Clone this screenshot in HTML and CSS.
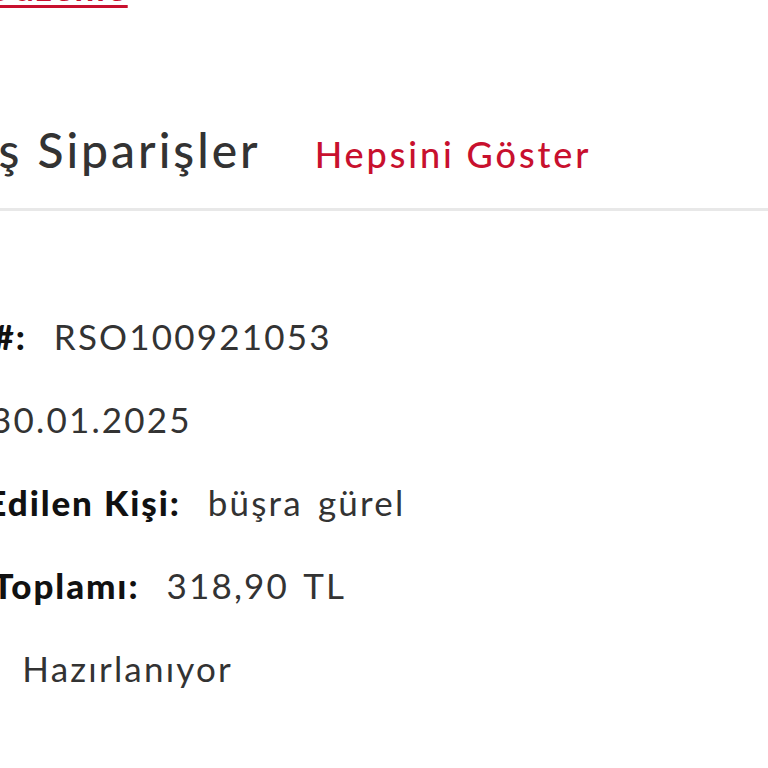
FILE: index.html
```html
<!DOCTYPE html>
<html lang="tr">
<head>
<meta charset="utf-8">
<title>Hesabım</title>
<link rel="stylesheet" href="styles.css">
</head>
<body>
<div class="page">
  <div class="account-head">
    <a class="edit-link" href="#">Düzenle</a>
  </div>

  <section class="orders">
    <div class="orders-head">
      <h2 class="orders-title">Geçmiş Siparişler</h2>
      <a class="show-all" href="#">Hepsini Göster</a>
    </div>

    <dl class="order">
      <div class="order-row">
        <dt class="label">Sipariş #:</dt>
        <dd class="value">RSO100921053</dd>
      </div>
      <div class="order-row">
        <dt class="label">Tarih:</dt>
        <dd class="value">30.01.2025</dd>
      </div>
      <div class="order-row">
        <dt class="label">Teslim Edilen Kişi:</dt>
        <dd class="value">büşra gürel</dd>
      </div>
      <div class="order-row">
        <dt class="label">Sipariş Toplamı:</dt>
        <dd class="value">318,90 TL</dd>
      </div>
      <div class="order-row">
        <dt class="label">Durum:</dt>
        <dd class="value">Hazırlanıyor</dd>
      </div>
    </dl>
  </section>
</div>
</body>
</html>
```

FILE: styles.css
```css
html, body {
  margin: 0;
  padding: 0;
  background: #ffffff;
  overflow: hidden;
}

body {
  font-family: Lato, "Open Sans", "Noto Sans", sans-serif;
  color: #333333;
}

.page {
  margin-left: -134px;
  margin-top: -34px;
  width: 1100px;
}

.account-head {
  display: flex;
  height: 43px;
}

.edit-link {
  margin-left: 120px;
  font-size: 35px;
  line-height: 43px;
  font-weight: 700;
  letter-spacing: 2px;
  color: #c8102e;
  text-decoration: underline;
  text-decoration-thickness: 3px;
  text-underline-offset: 4px;
}

.orders {
  margin-top: 112px;
}

.orders-head {
  display: flex;
  align-items: baseline;
  gap: 54px;
  padding-bottom: 30px;
  border-bottom: 3px solid #e8e8e8;
}

.orders-title {
  margin: 0 0 0 -17px;
  font-size: 48px;
  line-height: 57px;
  font-weight: 500;
  letter-spacing: 3px;
  color: #333333;
}

.show-all {
  font-size: 36px;
  font-weight: 500;
  letter-spacing: 2.9px;
  color: #c8102e;
  text-decoration: none;
}

.order {
  margin: 84px 0 0;
  display: flex;
  flex-direction: column;
}

.order-row {
  display: flex;
  align-items: baseline;
  gap: 27px;
  font-size: 35px;
  line-height: 83px;
}

.label {
  margin: 0;
  font-weight: 900;
  letter-spacing: 1.9px;
  color: #111111;
}

.value {
  margin: 0;
  font-weight: 400;
  letter-spacing: 2.2px;
  word-spacing: 4px;
  color: #333333;
}
```
